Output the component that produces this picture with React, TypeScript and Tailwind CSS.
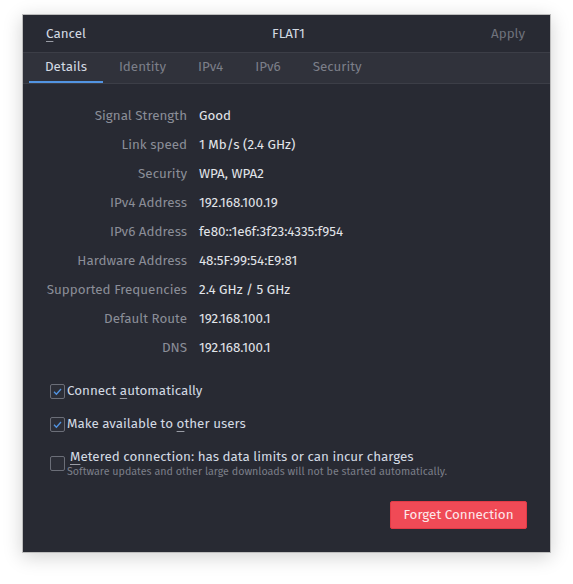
import React from "react";

const rows: [string, string][] = [
  ["Signal Strength", "Good"],
  ["Link speed", "1 Mb/s (2.4 GHz)"],
  ["Security", "WPA, WPA2"],
  ["IPv4 Address", "192.168.100.19"],
  ["IPv6 Address", "fe80::1e6f:3f23:4335:f954"],
  ["Hardware Address", "48:5F:99:54:E9:81"],
  ["Supported Frequencies", "2.4 GHz / 5 GHz"],
  ["Default Route", "192.168.100.1"],
  ["DNS", "192.168.100.1"],
];

const tabs = ["Details", "Identity", "IPv4", "IPv6", "Security"];

function Check({ checked }: { checked: boolean }) {
  return (
    <span className="flex h-[15px] w-[15px] shrink-0 items-center justify-center rounded-[2px] border border-[#6b6e78] bg-[#2c2e37]">
      {checked && (
        <svg width="11" height="11" viewBox="0 0 11 11" fill="none">
          <path d="M2 5.8 L4.4 8.2 L9 3" stroke="#5294e2" strokeWidth="1.3" />
        </svg>
      )}
    </span>
  );
}

function Mn({ children }: { children: React.ReactNode }) {
  return <span className="underline decoration-[#9a9da6] underline-offset-[3px]">{children}</span>;
}

export default function App() {
  return (
    <div
      className="min-h-[584px] w-[573px] bg-white pl-[22px] pt-[14px]"
      style={{ fontFamily: '"Fira Sans", "Open Sans", "Noto Sans", sans-serif' }}
    >
      <div className="flex h-[539px] w-[529px] flex-col border border-[#bdbdbd] bg-[#282a33] shadow-[0_4px_18px_rgba(0,0,0,0.18)]">
        {/* header */}
        <div className="flex h-[37px] items-center justify-between pl-[23px] pr-[25px] pt-[2px] text-[13.4px]">
          <span className="text-[#d3dae3]">
            <Mn>C</Mn>ancel
          </span>
          <span className="text-[#d3dae3]">FLAT1</span>
          <span className="text-[#6f727c]">Apply</span>
        </div>
        {/* tabs */}
        <div className="flex h-[32px] border-y border-[#3c3e47] bg-[#30323b] pl-[6px] text-[13.4px]">
          {tabs.map((t, i) => (
            <div
              key={t}
              className={`flex items-center border-b-2 px-4 ${i === 0 ? "border-[#5294e2] text-[#d3dae3]" : "border-transparent text-[#7c7f89]"}`}
            >
              {t}
            </div>
          ))}
        </div>
        {/* details */}
        <div className="grid grid-cols-[164px_1fr] gap-x-3 pt-[18px] text-[13.4px]">
          {rows.map(([k, v]) => (
            <React.Fragment key={k}>
              <div className="flex h-[29px] items-center justify-end text-[#8b8e98]">{k}</div>
              <div className="flex h-[29px] items-center text-[#e2e5ea]">{v}</div>
            </React.Fragment>
          ))}
        </div>
        {/* options */}
        <div className="flex flex-col pl-[27px] pt-[12px] text-[13.4px] text-[#d3dae3]">
          <label className="flex h-[33px] items-center gap-[2px]">
            <Check checked />
            <span>
              Connect <Mn>a</Mn>utomatically
            </span>
          </label>
          <label className="flex h-[33px] items-center gap-[2px]">
            <Check checked />
            <span>
              Make available to <Mn>o</Mn>ther users
            </span>
          </label>
          <label className="mt-[8px] flex items-center gap-[2px]">
            <Check checked={false} />
            <span className="flex flex-col leading-[16px]">
              <span className="pl-[3px]">
                <Mn>M</Mn>etered connection: has data limits or can incur charges
              </span>
              <span className="text-[10.7px] leading-[13px] text-[#7c7f89]">
                Software updates and other large downloads will not be started automatically.
              </span>
            </span>
          </label>
        </div>
        <div className="flex justify-end pr-[23px] pt-[23px]">
          <button className="h-[28px] w-[137px] rounded-[2px] border border-[#e23a46] bg-[#f04a56] text-[13.4px] text-[#fde8ea]">
            Forget Connection
          </button>
        </div>
      </div>
    </div>
  );
}
